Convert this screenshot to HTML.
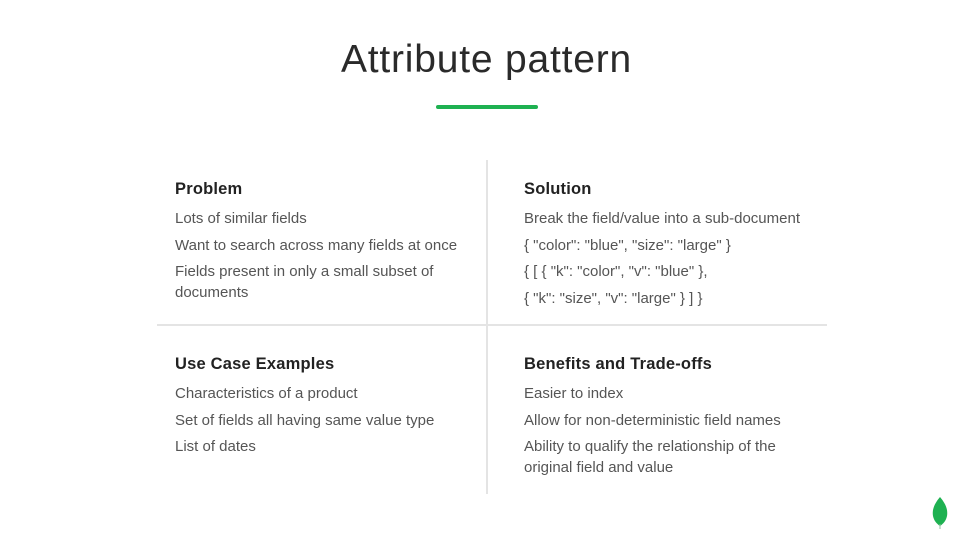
<!DOCTYPE html>
<html><head><style>
body{margin:0;width:973px;height:552px;background:#fff;font-family:"Liberation Sans",sans-serif;position:relative;overflow:hidden}
.t{position:absolute;left:0;width:973px;top:38px;text-align:center;font-size:39px;color:#2a2a2a;letter-spacing:0.8px}
.bar{position:absolute;left:436px;top:105px;width:102px;height:4px;background:#1eb151;border-radius:2px}
.v{position:absolute;left:486px;top:160px;width:2px;height:334px;background:#e4e4e4}
.h{position:absolute;left:157px;top:324px;width:670px;height:2px;background:#e4e4e4}
.c{position:absolute;color:#555;font-size:15px;width:300px}
.c h3{margin:0 0 9px;font-size:16.5px;color:#222;font-weight:bold;letter-spacing:0.2px}
.c p{margin:0 0 5.5px;line-height:21px}
</style></head><body>
<div class="t">Attribute pattern</div>
<div class="bar"></div>
<div class="v"></div><div class="h"></div>
<div class="c" style="left:175px;top:180px"><h3>Problem</h3><p>Lots of similar fields</p><p>Want to search across many fields at once</p><p>Fields present in only a small subset of documents</p></div>
<div class="c" style="left:524px;top:180px"><h3>Solution</h3><p>Break the field/value into a sub-document</p><p>{ "color": "blue", "size": "large" }</p><p>{ [ { "k": "color", "v": "blue" },</p><p>{ "k": "size", "v": "large" } ] }</p></div>
<div class="c" style="left:175px;top:355px"><h3>Use Case Examples</h3><p>Characteristics of a product</p><p>Set of fields all having same value type</p><p>List of dates</p></div>
<div class="c" style="left:524px;top:355px"><h3>Benefits and Trade-offs</h3><p>Easier to index</p><p>Allow for non-deterministic field names</p><p>Ability to qualify the relationship of the original field and value</p></div>
<svg style="position:absolute;left:931px;top:496px" width="18" height="34" viewBox="0 0 18 34"><path d="M9 1C3 8 1 14 2 20c1 5 4 8 7 10 3-2 6-5 7-10 1-6-1-12-7-19z" fill="#1eb151"/><path d="M9 28v5" stroke="#8fbf9f" stroke-width="1"/></svg>
</body></html>
